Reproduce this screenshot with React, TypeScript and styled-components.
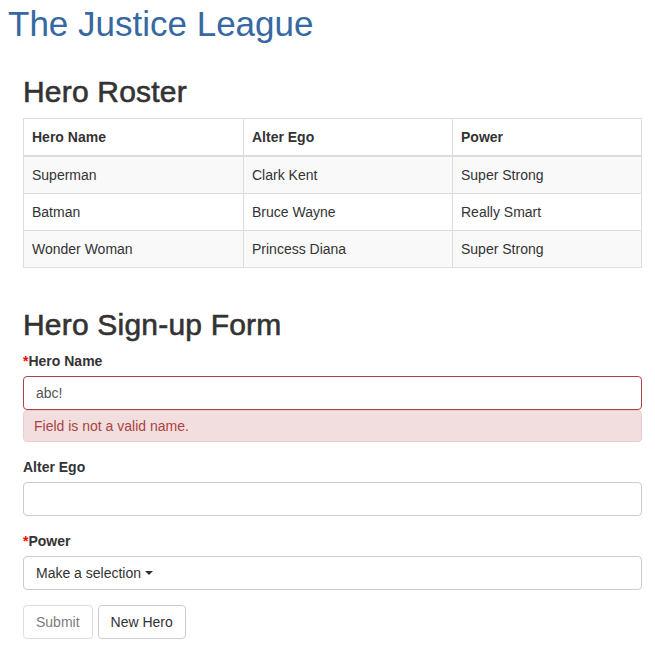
import React from "react";
import styled, { createGlobalStyle } from "styled-components";

const Global = createGlobalStyle`
  html, body { margin: 0; padding: 0; background: #fff; }
  body {
    font-family: "Liberation Sans", Arial, sans-serif;
    font-size: 14px;
    line-height: 20px;
    color: #333;
  }
  * { box-sizing: border-box; }
`;

const Page = styled.div`
  padding: 4px 13px 0 8px;
`;

const Title = styled.h1`
  margin: 0;
  font-size: 35px;
  line-height: 40px;
  font-weight: 400;
  color: #3668a2;
`;

const Container = styled.div`
  padding-left: 15px;
`;

const SectionTitle = styled.h2<{ $top: number }>`
  margin: ${(p) => p.$top}px 0 10px;
  font-size: 30px;
  line-height: 33px;
  font-weight: 400;
  color: #333;
  -webkit-text-stroke: 0.6px #333;
  letter-spacing: 0.2px;
`;

const Table = styled.table`
  width: 100%;
  border-collapse: collapse;
  border: 1px solid #ddd;
`;

const Th = styled.th<{ $w?: number }>`
  text-align: left;
  font-weight: 700;
  padding: 8px;
  border: 1px solid #ddd;
  border-bottom: 2px solid #ddd;
  width: ${(p) => (p.$w ? `${p.$w}px` : "auto")};
`;

const Tr = styled.tr`
  &:nth-child(odd) {
    background: #f9f9f9;
  }
`;

const Td = styled.td`
  padding: 8px;
  border: 1px solid #ddd;
`;

const FormGroup = styled.div`
  margin-bottom: 15px;
`;

const Label = styled.label`
  display: block;
  font-weight: 700;
  margin-bottom: 5px;
`;

const Req = styled.span`
  color: red;
`;

const Input = styled.input<{ $error?: boolean }>`
  display: block;
  width: 100%;
  height: 34px;
  padding: 6px 12px;
  font-family: inherit;
  font-size: 14px;
  color: #555;
  border: 1px solid ${(p) => (p.$error ? "#a94442" : "#ccc")};
  border-radius: 4px;
  background: #fff;
  outline: none;
`;

const Alert = styled.div`
  padding: 5px 10px;
  background: #f2dede;
  border: 1px solid #ebccd1;
  border-radius: 4px;
  color: #a94442;
`;

const SelectButton = styled.button`
  display: flex;
  align-items: center;
  width: 100%;
  height: 34px;
  padding: 6px 12px;
  font-family: inherit;
  font-size: 14px;
  color: #333;
  background: #fff;
  border: 1px solid #ccc;
  border-radius: 4px;
  text-align: left;
`;

const Caret = styled.span`
  display: inline-block;
  width: 0;
  height: 0;
  margin-left: 4px;
  border-top: 4px solid #333;
  border-left: 4px solid transparent;
  border-right: 4px solid transparent;
`;

const Buttons = styled.div`
  display: flex;
  gap: 5px;
`;

const Button = styled.button`
  height: 34px;
  padding: 6px 12px;
  font-family: inherit;
  font-size: 14px;
  color: #333;
  background: #fff;
  border: 1px solid #ccc;
  border-radius: 4px;
  &:disabled {
    opacity: 0.65;
  }
`;

const heroes = [
  ["Superman", "Clark Kent", "Super Strong"],
  ["Batman", "Bruce Wayne", "Really Smart"],
  ["Wonder Woman", "Princess Diana", "Super Strong"],
];

export default function App() {
  return (
    <Page>
      <Global />
      <Title>The Justice League</Title>
      <Container>
        <SectionTitle $top={31}>Hero Roster</SectionTitle>
        <Table>
          <thead>
            <tr>
              <Th $w={220}>Hero Name</Th>
              <Th $w={209}>Alter Ego</Th>
              <Th>Power</Th>
            </tr>
          </thead>
          <tbody>
            {heroes.map((h) => (
              <Tr key={h[0]}>
                <Td>{h[0]}</Td>
                <Td>{h[1]}</Td>
                <Td>{h[2]}</Td>
              </Tr>
            ))}
          </tbody>
        </Table>
        <SectionTitle $top={40}>Hero Sign-up Form</SectionTitle>
        <FormGroup>
          <Label>
            <Req>*</Req>Hero Name
          </Label>
          <Input $error defaultValue="abc!" />
          <Alert>Field is not a valid name.</Alert>
        </FormGroup>
        <FormGroup>
          <Label>Alter Ego</Label>
          <Input />
        </FormGroup>
        <FormGroup>
          <Label>
            <Req>*</Req>Power
          </Label>
          <SelectButton>
            Make a selection <Caret />
          </SelectButton>
        </FormGroup>
        <Buttons>
          <Button disabled>Submit</Button>
          <Button>New Hero</Button>
        </Buttons>
      </Container>
    </Page>
  );
}
